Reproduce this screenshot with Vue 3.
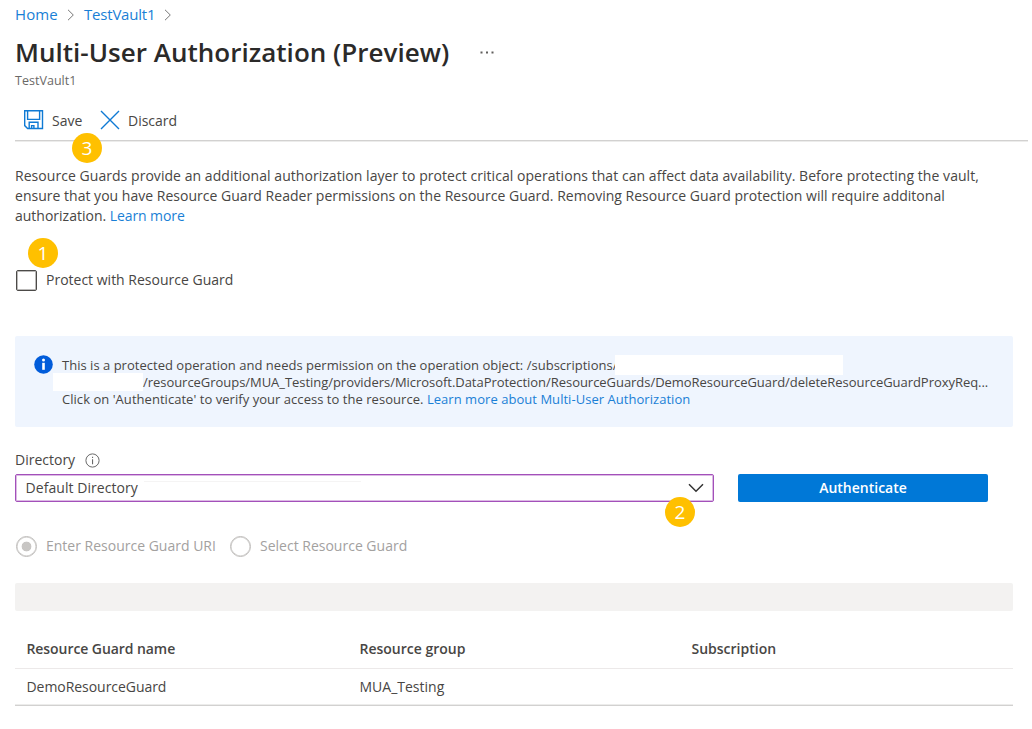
<script setup>
const introLines = [
  'Resource Guards provide an additional authorization layer to protect critical operations that can affect data availability. Before protecting the vault,',
  'ensure that you have Resource Guard Reader permissions on the Resource Guard. Removing Resource Guard protection will require additonal',
]
const columns = ['Resource Guard name', 'Resource group', 'Subscription']
const rows = [['DemoResourceGuard', 'MUA_Testing', '']]
</script>

<template>
  <main class="page">
    <nav class="crumbs">
      <a class="home">Home</a>
      <svg class="sep" width="8" height="12" viewBox="0 0 8 12"><path d="M1 .8 6.3 6 1 11.2" /></svg>
      <a class="vault">TestVault1</a>
      <svg class="sep" width="8" height="12" viewBox="0 0 8 12"><path d="M1 .8 6.3 6 1 11.2" /></svg>
    </nav>
    <header class="heading">
      <h1>Multi-User Authorization (Preview)</h1>
      <svg class="more" width="14" height="3" viewBox="0 0 14 3"><path d="M.5 .5h2v2h-2zM6 .5h2v2H6zM11.5 .5h2v2h-2z" /></svg>
    </header>
    <div class="subtitle">TestVault1</div>

    <div class="toolbar">
      <svg class="save-icon" width="20" height="20" viewBox="0 0 20 20">
        <path d="M.7 .7h17.8v17.8H3.6L.7 15.6zM3.6 .7v8.7h12V.7M5.2 18.5v-6.2h8.8v6.2M7.6 18.5v-2.9h2.3v2.9" />
      </svg>
      <span class="save">Save</span>
      <svg class="discard-icon" width="20" height="20" viewBox="0 0 20 20"><path d="M1 1l18 18M19 1 1 19" /></svg>
      <span class="discard">Discard</span>
      <span class="badge three">3</span>
    </div>

    <p class="intro">
      <span v-for="(line, i) in introLines" :key="i" :class="'line' + i">{{ line }}</span>
      <span class="line2">authorization. <a>Learn more</a></span>
    </p>

    <div class="protect">
      <span class="box"></span>
      <span class="protect-label">Protect with Resource Guard</span>
      <span class="badge one">1</span>
    </div>

    <section class="notice">
      <svg class="notice-icon" width="19" height="19" viewBox="0 0 19 19">
        <circle cx="9.5" cy="9.5" r="9.3" fill="#015cda" />
        <circle cx="9.5" cy="4.9" r="1.5" fill="#fff" />
        <path d="M8.2 7.8h2.6v7H8.2z" fill="#fff" />
      </svg>
      <div class="notice-text">
        <div class="n0"><span>This is a protected operation and needs permission on the operation object: /subscriptions/</span><i class="mask wide"></i></div>
        <div class="n1"><i class="mask"></i><span>/resourceGroups/MUA_Testing/providers/Microsoft.DataProtection/ResourceGuards/DemoResourceGuard/deleteResourceGuardProxyReq...</span></div>
        <div class="n2"><span>Click on 'Authenticate' to verify your access to the resource. <a>Learn more about Multi-User Authorization</a></span></div>
      </div>
    </section>

    <div class="directory-label">
      <span>Directory</span>
      <svg width="15" height="15" viewBox="0 0 15 15">
        <circle cx="7.5" cy="7.5" r="6.6" fill="none" stroke="#696969" />
        <path d="M7 3.8h1.1v1.3H7zM7 6.3h1.1v5H7z" fill="#696969" />
      </svg>
    </div>
    <div class="controls">
      <div class="select">
        <span class="value">Default Directory</span>
        <i class="trace"></i>
        <svg width="16" height="10" viewBox="0 0 16 10"><path d="M1 1.2 8 8.2 15 1.2" /></svg>
        <span class="badge two">2</span>
      </div>
      <button>Authenticate</button>
    </div>

    <div class="radios">
      <span class="radio on"></span><span class="uri">Enter Resource Guard URI</span>
      <span class="radio"></span><span class="pick">Select Resource Guard</span>
    </div>

    <div class="strip"></div>

    <div class="table">
      <div class="tr head"><span v-for="(c, i) in columns" :key="c" :class="'h' + i">{{ c }}</span></div>
      <div v-for="r in rows" :key="r[0]" class="tr"><span v-for="(c, i) in r" :key="i" :class="'c' + i">{{ c }}</span></div>
    </div>
  </main>
</template>

<style>
body { margin: 0; background: #fff; }
</style>

<style scoped>
.page {
  box-sizing: border-box;
  width: 1032px;
  height: 729px;
  padding-left: 15px;
  overflow: hidden;
  font: 14px/20px 'Open Sans', 'Noto Sans', sans-serif;
  color: #484644;
  white-space: nowrap;
}
a { color: #1a7fd6; }
svg { flex: none; }
.crumbs { display: flex; align-items: center; height: 30px; font-size: 15px; }
.crumbs a { line-height: 20px; padding-bottom: 2px; }
.home { width: 43px; letter-spacing: .1px; }
.vault { width: 71px; letter-spacing: -.2px; }
.sep { margin: -1px 9px 0 9px; fill: none; stroke: #777; }
.heading { display: flex; align-items: center; height: 44px; }
h1 { width: 435px; margin: 0; font-size: 26px; line-height: 40px; font-weight: 600; letter-spacing: .02px; color: #2b2a29; }
.more { margin-left: 30px; fill: #605e5c; }
.subtitle { height: 26px; line-height: 13px; font-size: 12.5px; letter-spacing: .03px; color: #6b6967; }
.toolbar { position: relative; display: flex; align-items: center; box-sizing: border-box; width: 1013px; height: 41px; padding: 1px 0 0 9px; border-bottom: 1px solid #d2d1d0; box-shadow: 0 1px #ececeb; }
.toolbar svg { margin-top: -2px; }
.toolbar path { fill: none; stroke: #0f7ad4; stroke-width: 1.4; }
.save { width: 48px; margin-left: 8px; }
.discard { margin-left: 8px; }
.badge { position: absolute; width: 30px; height: 30px; border-radius: 50%; background: #ffc000; color: #fff; text-align: center; font-size: 19px; line-height: 30px; }
.three { left: 57px; top: 33px; }
.intro { display: flex; flex-direction: column; height: 60px; margin: 25px 0 0; }
.line0 { letter-spacing: .048px; }
.line1 { letter-spacing: .017px; }
.line2 a { letter-spacing: -.1px; }
.protect { position: relative; display: flex; align-items: center; height: 22px; margin-top: 43px; }
.box { box-sizing: border-box; width: 21px; height: 21px; margin: 1px 9px 0 1px; border: 1px solid #4c4a48; border-radius: 2px; box-shadow: inset 0 0 0 1px #bbbab9; }
.one { left: 13px; top: -31px; }
.notice { display: flex; box-sizing: border-box; width: 998px; height: 91px; margin-top: 45px; padding: 20px 0 0 19px; border-radius: 2px; background: #eff5fe; }
.notice-icon { margin: -1px 9px 0 0; }
.notice-text { line-height: 17px; font-size: 13px; }
.notice-text > div { display: flex; align-items: center; height: 17.2px; white-space: pre; }
.notice-text > div > span { padding-top: 2px; }
.mask { width: 90px; height: 18px; margin-left: -9px; background: #fff; }
.wide { width: 228px; height: 20px; margin-left: 0; }
.n0 span { width: 553px; letter-spacing: .02px; }
.n1 span { letter-spacing: -.042px; }
.n2 span { letter-spacing: .04px; }
.directory-label { display: flex; align-items: center; height: 20px; margin-top: 23px; }
.directory-label span { width: 70px; }
.controls { display: flex; gap: 24px; margin-top: 4px; height: 28px; }
.select { position: relative; display: flex; align-items: center; box-sizing: border-box; width: 699px; padding: 0 9px 0 9.5px; border: 1px solid #a350ba; border-radius: 2px; box-shadow: inset 0 0 0 1px #dcbbe4; }
.value { width: 118px; letter-spacing: .06px; }
.trace { width: 217px; height: 1px; margin: -13px auto 0 0; background: #f5f4f4; }
.select path { fill: none; stroke: #333; stroke-width: 1.5; }
.two { left: 649px; top: 22px; }
button { width: 250px; border: 0; border-radius: 2px; background: #0078d7; color: #fff; font: 600 14px/28px 'Open Sans', sans-serif; padding: 0; }
.radios { display: flex; align-items: center; height: 22px; margin-top: 33px; margin-bottom: 26px; color: #a3a19f; }
.radio { box-sizing: border-box; width: 21px; height: 21px; margin: 0 9px 0 1px; border: 1px solid #bebcba; border-radius: 50%; box-shadow: inset 0 0 0 .5px #c8c6c4; }
.on { background: radial-gradient(circle, #c8c6c4 4.6px, transparent 5.2px); }
.uri { width: 183px; }
.strip { width: 998px; height: 28px; border-radius: 2px; background: #f3f2f1; }
.table { width: 998px; margin-top: 18px; }
.tr { display: grid; grid-template-columns: 333px 332px 1fr; align-items: center; box-sizing: border-box; height: 37px; padding: 0 0 0 11.5px; border-bottom: 1px solid #d2d1d0; box-shadow: 0 -1px 0 #ececeb inset; }
.head { height: 40px; border-bottom: 1px solid #ece9e9; box-shadow: none; font-weight: 600; }
.h0 { letter-spacing: -.07px; }
.c0 { letter-spacing: -.05px; }
</style>
